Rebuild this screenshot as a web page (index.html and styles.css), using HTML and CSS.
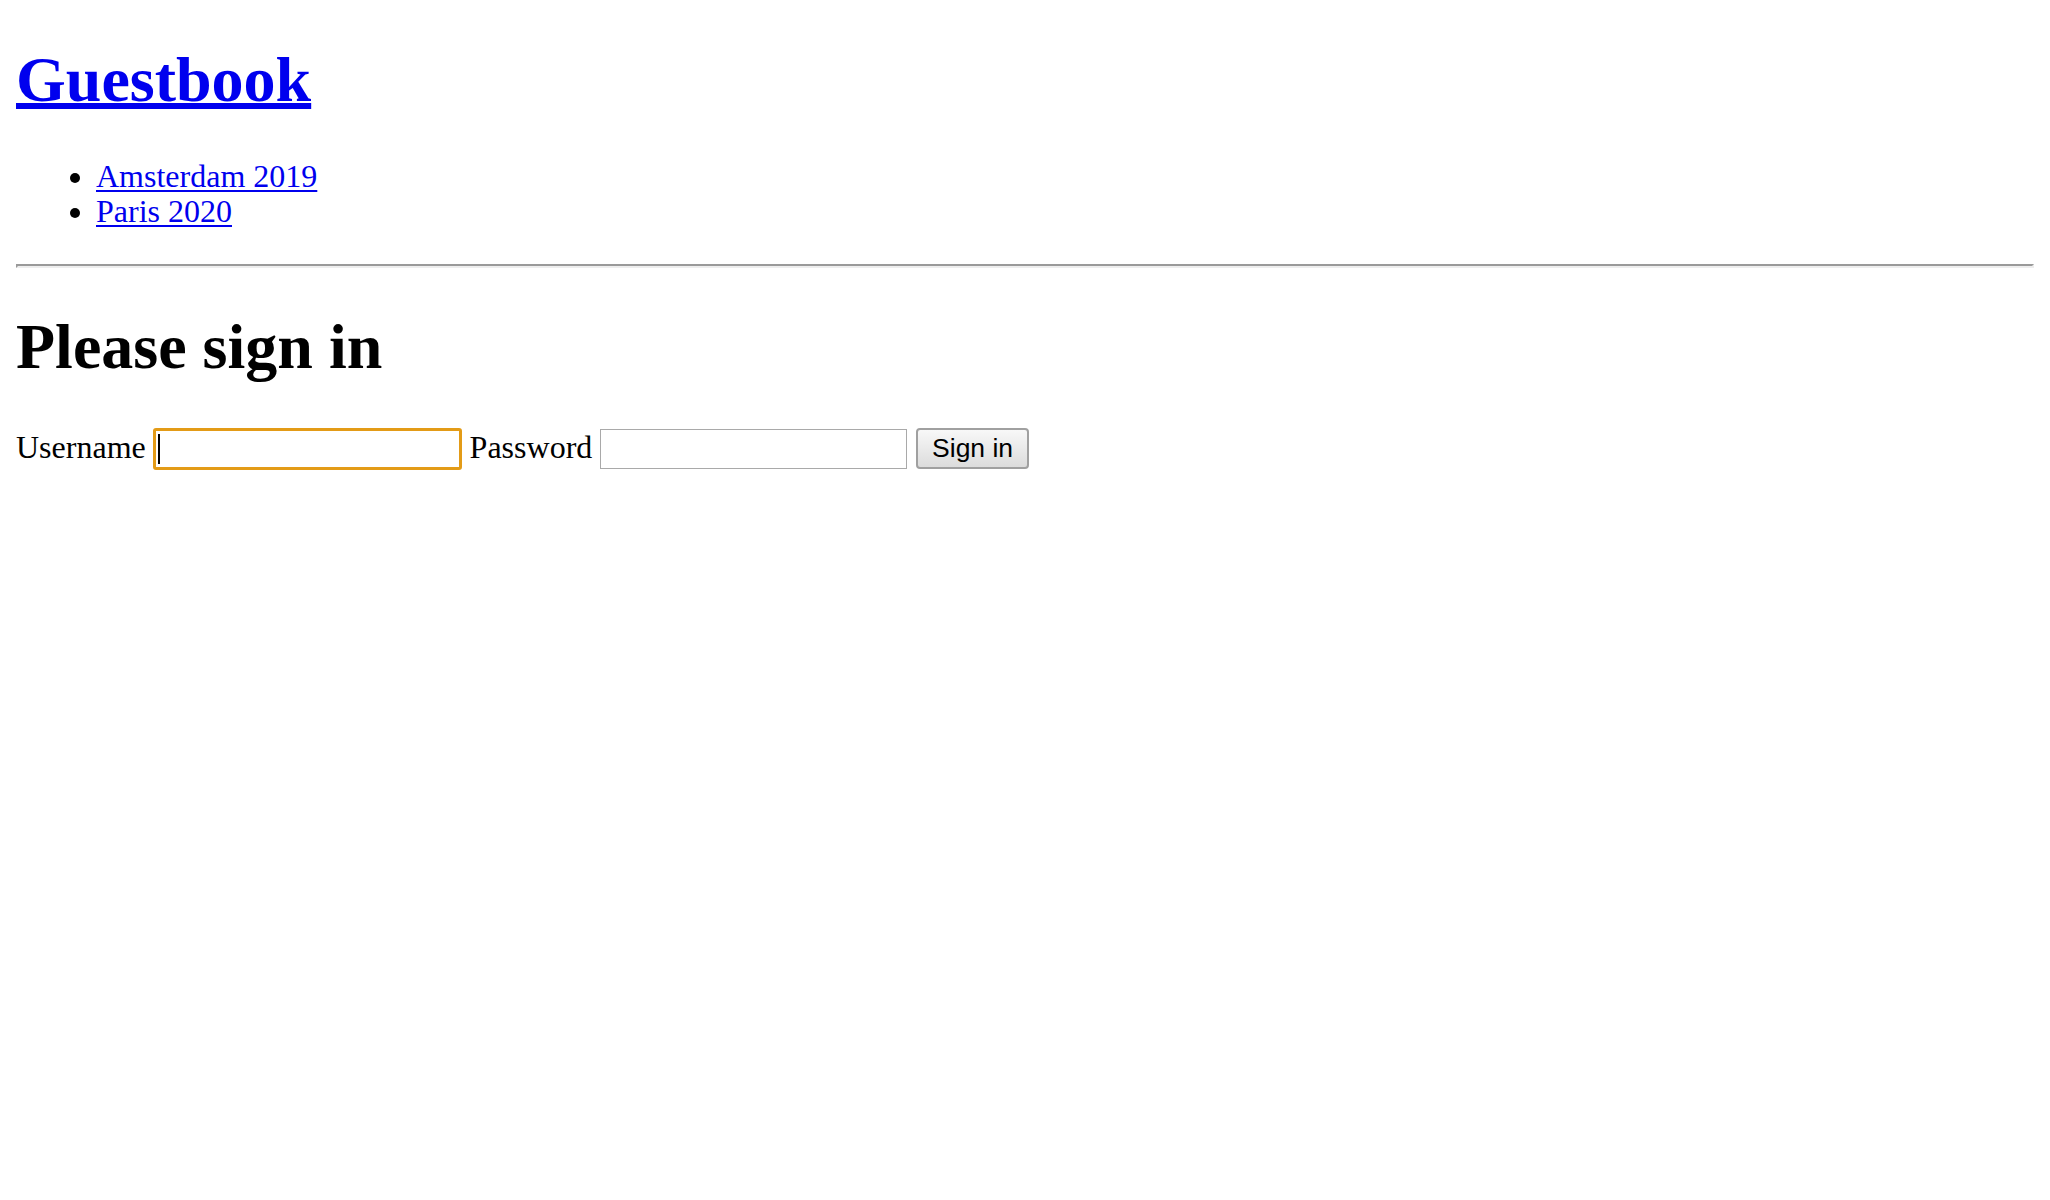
FILE: index.html
```html
<!DOCTYPE html>
<html lang="en">
<head>
<meta charset="utf-8">
<title>Guestbook</title>
<link rel="stylesheet" href="styles.css">
</head>
<body>
<h1 class="site-title"><a href="#">Guestbook</a></h1>
<ul class="conf-list">
<li><a href="#">Amsterdam 2019</a></li>
<li><a href="#">Paris 2020</a></li>
</ul>
<hr class="rule">
<h1 class="page-title">Please sign in</h1>
<form class="login-form">
<label class="form-label" for="username">Username</label>
<input class="field field-focused" type="text" id="username" name="username">
<label class="form-label" for="password">Password</label>
<input class="field" type="password" id="password" name="password">
<button class="submit" type="submit">Sign in</button>
</form>
</body>
</html>
```

FILE: styles.css
```css
html {
  background: #ffffff;
}
body {
  margin: 0;
  padding: 0 16px 16px;
  font-family: "Liberation Serif", "Times New Roman", serif;
  font-size: 32px;
  color: #000000;
}
a {
  color: #0000ee;
  text-decoration: underline;
}
.site-title {
  font-size: 64px;
  line-height: 71px;
  font-weight: bold;
  margin: 44px 0 44px;
}
.site-title a {
  text-decoration-thickness: 6px;
  text-underline-offset: 2px;
}
.conf-list {
  margin: 0;
  padding-left: 80px;
  list-style: disc;
  line-height: 35.4px;
}
.conf-list a {
  text-decoration-thickness: 2px;
  text-underline-offset: 2.5px;
}
.rule {
  margin: 34px 0 43px;
  height: 0;
  border-style: solid;
  border-width: 2px;
  border-top-color: #9a9a9a;
  border-left-color: #9a9a9a;
  border-bottom-color: #eeeeee;
  border-right-color: #eeeeee;
}
.page-title {
  font-size: 64px;
  line-height: 71px;
  font-weight: bold;
  margin: 0;
}
.login-form {
  margin: 45.7px 0 0;
  display: flex;
  align-items: center;
  gap: 8px;
}
.form-label {
  line-height: 35.4px;
  padding-bottom: 2px;
}
.field {
  box-sizing: border-box;
  width: 307px;
  height: 40px;
  padding: 2px 4px;
  font-family: "Liberation Sans", Arial, sans-serif;
  font-size: 26px;
  border: 1px solid #a9a9a9;
  border-radius: 0;
  background: #ffffff;
  outline: none;
}
.field-focused {
  width: 308.4px;
  height: 42.6px;
  margin-left: -0.5px;
  border: 3px solid #e39b17;
  border-radius: 3px;
  background: #ffffff linear-gradient(#000000, #000000) no-repeat 2px center / 2.4px 30px;
}
.submit {
  box-sizing: border-box;
  height: 41px;
  width: 112.6px;
  margin-left: 1px;
  padding: 0;
  font-family: "Liberation Sans", Arial, sans-serif;
  font-size: 26.5px;
  color: #000000;
  border: 2px solid #a0a0a0;
  border-radius: 4px;
  background: linear-gradient(#f8f8f8, #dcdcdc);
}
```
